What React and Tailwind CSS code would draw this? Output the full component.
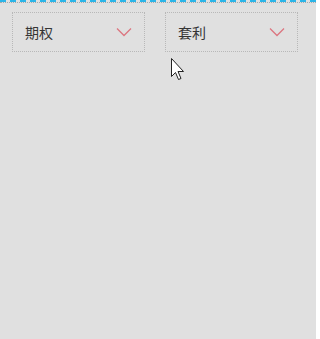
import React from 'react';

function Chevron() {
  return (
    <svg width="16" height="10" viewBox="0 0 16 10" className="shrink-0">
      <path d="M1 1.5 L8 8.5 L15 1.5" fill="none" stroke="#dc7680" strokeWidth="1.3" />
    </svg>
  );
}

function Picker({ label }) {
  return (
    <div className="flex h-[40px] w-[133px] items-center justify-between border border-dotted border-[#b8b8b8] pl-[12px] pr-[12px]">
      <span className="text-[14px] leading-none text-[#353535]">{label}</span>
      <Chevron />
    </div>
  );
}

function Cursor() {
  return (
    <svg
      width="14"
      height="24"
      viewBox="0 0 14 24"
      className="absolute left-[171px] top-[58px]"
    >
      <path
        d="M0.5 0.5 L0.5 18.5 L4.5 14.5 L7.5 21.5 L10 20.5 L7 13.5 L12.5 13.5 Z"
        fill="#ffffff"
        stroke="#222222"
        strokeWidth="1"
      />
    </svg>
  );
}

export default function App() {
  return (
    <div
      className="relative h-[339px] w-[316px] bg-[#e0e0e0]"
      style={{ fontFamily: '"Noto Sans CJK SC", "Noto Sans", sans-serif' }}
    >
      <div className="h-[2px] w-full border-t-2 border-dashed border-[#2bb5e8]" />
      <div className="h-[1px] w-full border-t border-dotted border-[#a9a9a9]" />
      <div className="flex gap-[20px] pl-[12px] pt-[9px]">
        <Picker label="期权" />
        <Picker label="套利" />
      </div>
      <Cursor />
    </div>
  );
}
